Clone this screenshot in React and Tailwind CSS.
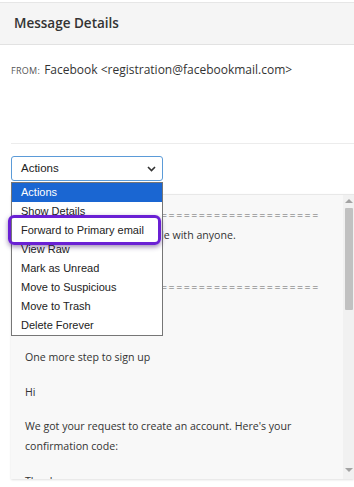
import React from "react";

const options = [
  "Actions",
  "Show Details",
  "Forward to Primary email",
  "View Raw",
  "Mark as Unread",
  "Move to Suspicious",
  "Move to Trash",
  "Delete Forever",
];

const rule = "=======================================";

function Scrollbar() {
  return (
    <div className="w-[11px] bg-[#f1f1f1] flex flex-col items-center shrink-0">
      <svg width="8" height="6" viewBox="0 0 8 6" className="mt-[3px]">
        <path d="M0 5 L4 1 L8 5 Z" fill="#a3a3a3" />
      </svg>
      <div className="w-[8px] h-[102px] mt-[4px] bg-[#c1c1c1] rounded-[1px]" />
      <div className="flex-1" />
      <svg width="8" height="6" viewBox="0 0 8 6" className="mb-[6px]">
        <path d="M0 1 L4 5 L8 1 Z" fill="#a3a3a3" />
      </svg>
    </div>
  );
}

export default function App() {
  return (
    <div
      className="relative w-[354px] h-[487px] overflow-hidden bg-white text-[#333]"
      style={{ fontFamily: "'Open Sans', 'Noto Sans', sans-serif" }}
    >
      {/* header */}
      <div className="h-[3px] bg-white border-b border-[#e6e6e6]" />
      <div className="h-[42px] bg-[#f5f5f5] border-b border-[#e2e2e2] flex items-center px-[14px]">
        <h1 className="text-[13.5px] font-semibold text-[#333]">Message Details</h1>
      </div>

      {/* from */}
      <div className="px-[11px] pt-[16px] flex items-baseline gap-[4px]">
        <span className="text-[9px] uppercase tracking-[0.3px] text-[#555]">From:</span>
        <span className="text-[12px] text-[#333]">Facebook &lt;registration@facebookmail.com&gt;</span>
      </div>

      <div className="ml-[11px] mt-[64px] border-t border-[#ececec]" />

      {/* select */}
      <div className="ml-[11px] mt-[12px] w-[152px] h-[25px] border border-[#5b9bd8] rounded-[3px] flex items-center justify-between pl-[9px] pr-[6px]">
        <span className="text-[11.5px] text-[#222]" style={{ fontFamily: "'Liberation Sans', Arial, sans-serif" }}>Actions</span>
        <svg width="9" height="6" viewBox="0 0 9 6">
          <path d="M1 1 L4.5 4.5 L8 1" fill="none" stroke="#333" strokeWidth="1.6" />
        </svg>
      </div>

      {/* message body */}
      <div className="ml-[11px] mt-[13px] h-[285px] bg-[#f8f8f8] border-t border-[#e8e8e8] shadow-[0_1px_2px_rgba(0,0,0,0.12)] flex">
        <div className="flex-1 pl-[14px] pr-[14px] pt-[10px] text-[10.6px] leading-[20px] text-[#333] overflow-hidden">
          <p className="text-[#666] tracking-[1.5px] whitespace-nowrap">{rule}</p>
          <p>Please do not share this code with anyone.</p>
          <p className="h-[32px]" />
          <p className="text-[#666] tracking-[1.5px] whitespace-nowrap">{rule}</p>
          <p className="h-[50px]" />
          <p className="mb-[15px]">One more step to sign up</p>
          <p className="mb-[14px]">Hi</p>
          <p className="mb-[15px]">We got your request to create an account. Here&apos;s your confirmation code:</p>
          <p>Thanks,</p>
        </div>
        <Scrollbar />
      </div>

      {/* open dropdown list */}
      <ul
        className="absolute left-[11px] top-[182px] w-[152px] bg-white border border-[#767676] text-[11px] text-[#222]"
        style={{ fontFamily: "'Liberation Sans', Arial, sans-serif" }}
      >
        {options.map((o, i) => (
          <li
            key={o}
            className={`h-[19px] leading-[19px] pl-[9px] ${i === 0 ? "bg-[#1a66d2] text-white" : ""}`}
          >
            {o}
          </li>
        ))}
      </ul>

      {/* highlight */}
      <div className="absolute left-[8px] top-[215px] w-[153px] h-[30px] border-[3px] border-[#6a20d4] rounded-[6px] shadow-[0_2px_5px_rgba(40,0,90,0.45)]" />
    </div>
  );
}
